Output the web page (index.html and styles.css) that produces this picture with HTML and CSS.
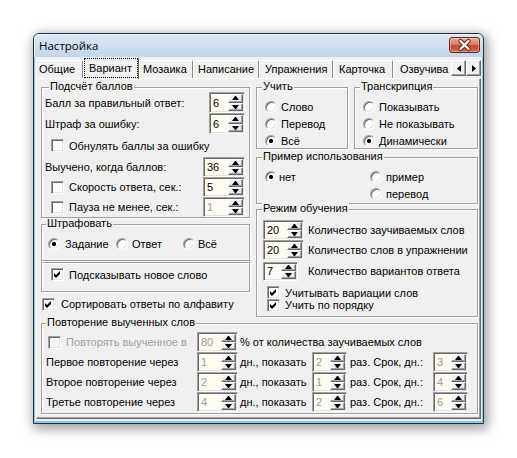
FILE: index.html
```html
<!DOCTYPE html>
<html lang="ru">
<head>
<meta charset="utf-8">
<title>Настройка</title>
<link rel="stylesheet" href="styles.css">
</head>
<body>
<div class="window">
  <div class="titlebar">
    <span class="title">Настройка</span>
    <span class="close"><svg width="29" height="14" viewBox="0 0 29 14"><path d="M10.5 3 L18.5 11 M18.5 3 L10.5 11" stroke="#5a1c12" stroke-width="4.2" stroke-linecap="round"/><path d="M10.5 3 L18.5 11 M18.5 3 L10.5 11" stroke="#fff" stroke-width="2.4" stroke-linecap="round"/></svg></span>
  </div>
  <div class="client">
    <div class="tabs">
      <div class="tablist">
        <span class="tab t1">Общие</span>
        <span class="tab t2 sel"><span class="focus">Вариант</span></span>
        <span class="tab t3">Мозаика</span>
        <span class="tab t4">Написание</span>
        <span class="tab t5">Упражнения</span>
        <span class="tab t6">Карточка</span>
        <span class="tab t7">Озвучива</span>
      </div>
      <div class="arrows">
        <span class="ab"><svg width="4" height="7" viewBox="0 0 4 7"><polygon points="4,0 4,7 0,3.5" fill="#000"/></svg></span>
        <span class="ab"><svg width="4" height="7" viewBox="0 0 4 7"><polygon points="0,0 0,7 4,3.5" fill="#000"/></svg></span>
      </div>
    </div>
    <div class="page">
      <div class="top">
        <div class="lc">
          <div class="g g1">
            <span class="lg">Подсчёт баллов</span>
            <div class="r h21"><span class="lbl">Балл за правильный ответ:</span><span class="sp w36 s21"><span class="v">6</span><span class="ud"><i class="u"></i><i class="d"></i></span></span></div>
            <div class="r h21"><span class="lbl">Штраф за ошибку:</span><span class="sp w36 s21"><span class="v">6</span><span class="ud"><i class="u"></i><i class="d"></i></span></span></div>
            <div class="r h23"><span class="chk ind"><span class="cb"></span>Обнулять баллы за ошибку</span></div>
            <div class="r h20"><span class="lbl">Выучено, когда баллов:</span><span class="sp w42"><span class="v">36</span><span class="ud"><i class="u"></i><i class="d"></i></span></span></div>
            <div class="r h20"><span class="chk ind"><span class="cb"></span>Скорость ответа, сек.:</span><span class="sp w42"><span class="v">5</span><span class="ud"><i class="u"></i><i class="d"></i></span></span></div>
            <div class="r h20"><span class="chk ind"><span class="cb"></span>Пауза не менее, сек.:</span><span class="sp w42 dis"><span class="v">1</span><span class="ud"><i class="u"></i><i class="d"></i></span></span></div>
          </div>
          <div class="g g2">
            <span class="lg">Штрафовать</span>
            <div class="radios3">
              <span class="opt o1"><span class="rb on"></span>Задание</span>
              <span class="opt o2"><span class="rb"></span>Ответ</span>
              <span class="opt o3"><span class="rb"></span>Всё</span>
            </div>
          </div>
          <div class="g g3">
            <div class="r h23"><span class="chk ind"><span class="cb on"><svg width="11" height="11" viewBox="0 0 11 11"><polygon points="2,4 4,6 8,2 8,5 4,9 2,7" fill="#000"/></svg></span>Подсказывать новое слово</span></div>
          </div>
          <div class="sortrow"><span class="chk"><span class="cb on"><svg width="11" height="11" viewBox="0 0 11 11"><polygon points="2,4 4,6 8,2 8,5 4,9 2,7" fill="#000"/></svg></span>Сортировать ответы по алфавиту</span></div>
        </div>
        <div class="rc">
          <div class="pair">
            <div class="g g-learn">
              <span class="lg lgr">Учить</span>
              <div class="rlist">
                <span class="opt"><span class="rb"></span>Слово</span>
                <span class="opt"><span class="rb"></span>Перевод</span>
                <span class="opt"><span class="rb on"></span>Всё</span>
              </div>
            </div>
            <div class="g g-trans">
              <span class="lg lgr">Транскрипция</span>
              <div class="rlist">
                <span class="opt"><span class="rb"></span>Показывать</span>
                <span class="opt"><span class="rb"></span>Не показывать</span>
                <span class="opt"><span class="rb on"></span>Динамически</span>
              </div>
            </div>
          </div>
          <div class="g g-ex">
            <span class="lg lgr">Пример использования</span>
            <div class="exgrid">
              <span class="opt tight"><span class="rb on"></span>нет</span>
              <span class="opt"><span class="rb"></span>пример</span>
              <span></span>
              <span class="opt"><span class="rb"></span>перевод</span>
            </div>
          </div>
          <div class="g g-mode">
            <span class="lg lgm">Режим обучения</span>
            <div class="mrow m1"><span class="sp w41"><span class="v">20</span><span class="ud"><i class="u"></i><i class="d"></i></span></span><span>Количество заучиваемых слов</span></div>
            <div class="mrow m2"><span class="sp w41"><span class="v">20</span><span class="ud"><i class="u"></i><i class="d"></i></span></span><span>Количество слов в упражнении</span></div>
            <div class="mrow m3"><span class="sp w35 s19"><span class="v">7</span><span class="ud"><i class="u"></i><i class="d"></i></span></span><span>Количество вариантов ответа</span></div>
            <div class="crow c1"><span class="chk"><span class="cb on"><svg width="11" height="11" viewBox="0 0 11 11"><polygon points="2,4 4,6 8,2 8,5 4,9 2,7" fill="#000"/></svg></span>Учитывать вариации слов</span></div>
            <div class="crow c2"><span class="chk"><span class="cb on"><svg width="11" height="11" viewBox="0 0 11 11"><polygon points="2,4 4,6 8,2 8,5 4,9 2,7" fill="#000"/></svg></span>Учить по порядку</span></div>
          </div>
        </div>
      </div>
      <div class="g g-rep">
        <span class="lg">Повторение выученных слов</span>
        <div class="rep">
          <span class="chk off first"><span class="cb"></span>Повторять выученное в</span>
          <span class="sp w41 dis"><span class="v">80</span><span class="ud"><i class="u"></i><i class="d"></i></span></span>
          <span class="txt span4">% от количества заучиваемых слов</span>

          <span class="lbl2">Первое повторение через</span>
          <span class="sp w41 dis"><span class="v">1</span><span class="ud"><i class="u"></i><i class="d"></i></span></span>
          <span class="txt">дн., показать</span>
          <span class="sp w35 dis"><span class="v">2</span><span class="ud"><i class="u"></i><i class="d"></i></span></span>
          <span class="txt t3x">раз. Срок, дн.:</span>
          <span class="sp w35 dis"><span class="v">3</span><span class="ud"><i class="u"></i><i class="d"></i></span></span>

          <span class="lbl2">Второе повторение через</span>
          <span class="sp w41 dis"><span class="v">2</span><span class="ud"><i class="u"></i><i class="d"></i></span></span>
          <span class="txt">дн., показать</span>
          <span class="sp w35 dis"><span class="v">1</span><span class="ud"><i class="u"></i><i class="d"></i></span></span>
          <span class="txt t3x">раз. Срок, дн.:</span>
          <span class="sp w35 dis"><span class="v">4</span><span class="ud"><i class="u"></i><i class="d"></i></span></span>

          <span class="lbl2">Третье повторение через</span>
          <span class="sp w41 dis"><span class="v">4</span><span class="ud"><i class="u"></i><i class="d"></i></span></span>
          <span class="txt">дн., показать</span>
          <span class="sp w35 dis"><span class="v">2</span><span class="ud"><i class="u"></i><i class="d"></i></span></span>
          <span class="txt t3x">раз. Срок, дн.:</span>
          <span class="sp w35 dis"><span class="v">6</span><span class="ud"><i class="u"></i><i class="d"></i></span></span>
        </div>
      </div>
    </div>
  </div>
</div>
</body>
</html>
```

FILE: styles.css
```css
* { box-sizing: border-box; }
html, body { margin: 0; padding: 0; }
body {
  width: 517px; height: 458px; overflow: hidden;
  background: #fff;
  font-family: "Liberation Sans", Arial, sans-serif;
  font-size: 11px; color: #000;
}
i { font-style: normal; }

.window {
  margin: 33px 0 0 33px;
  width: 451px; height: 391px;
  border: 1px solid #27313c;
  border-radius: 6px 6px 0 0;
  background: linear-gradient(#dbe7f5, #c3d6ec 23px, #c3d6ec);
  box-shadow: 2px 3px 12px 2px rgba(0,0,0,.38);
  display: flex; flex-direction: column;
}
.titlebar {
  flex: none; height: 23px;
  display: flex; align-items: flex-start;
  padding-left: 5px;
  border-radius: 5px 5px 0 0;
  box-shadow: inset 1px 1px 0 rgba(255,255,255,.6);
}
.title {
  font-family: "Open Sans", "Noto Sans", sans-serif;
  font-size: 11.5px; line-height: 23px; color: #000;
}
.close {
  margin: 3px 3px 0 auto;
  width: 31px; height: 16px;
  border: 1px solid #6e2418;
  border-radius: 3px;
  background: linear-gradient(#e9a899, #d9806b 45%, #c24a30 55%, #d06a4d);
  box-shadow: inset 0 0 0 1px rgba(255,255,255,.35);
  display: flex; align-items: center; justify-content: center;
}

.client {
  flex: 1;
  display: flex; flex-direction: column;
  background: #f0f0f0;
  border: solid #7fcdee;
  border-width: 0 1px 2px 1px;
  padding: 0 1px 2px 1px;
}

/* tabs */
.tabs {
  flex: none; height: 22px; margin-bottom: -1px;
  display: flex; position: relative; z-index: 1;
}
.tablist { flex: 1; display: flex; align-items: flex-end; overflow: hidden; min-width: 0; }
.tab {
  flex: none; height: 18px; margin-bottom: 1px;
  border-left: 1px solid #fff;
  border-top: 1px solid #fff;
  border-right: 1px solid #8a8a8a;
  border-radius: 2px 2px 0 0;
  line-height: 16px; white-space: nowrap;
}
.t1 { width: 47px; padding-left: 2px; }
.t2 { width: 56px; }
.t3 { width: 54px; padding-left: 3px; }
.t4 { width: 66px; padding-left: 4px; }
.t5 { width: 74px; padding-left: 5px; }
.t6 { width: 60px; padding-left: 5px; }
.t7 { flex: 1; padding-left: 6px; border-right: 0; }
.tab.sel {
  height: 22px; margin-bottom: 0;
  background: #f0f0f0;
  border-right-color: #696969;
  padding: 0;
  display: flex;
}
.focus {
  flex: 1; margin: 0 0 1px 0;
  border: 1px dotted #000;
  padding-left: 4px; line-height: 18px;
}
.arrows { flex: none; display: flex; padding-top: 3px; }
.ab {
  width: 15px; height: 16px;
  background: #f0f0f0;
  border: 1px solid;
  border-color: #fff #696969 #696969 #fff;
  box-shadow: inset -1px -1px 0 #a0a0a0;
  display: flex; align-items: center; justify-content: center;
}

.page {
  flex: 1;
  border: 1px solid;
  border-color: #fff #696969 #696969 #fff;
  box-shadow: inset -1px -1px 0 #a0a0a0;
  padding: 8px 2px 4px 4px;
}
.top { display: flex; gap: 6px; }
.lc { width: 209px; }
.rc { width: 222px; }

/* group boxes */
.g {
  border: 1px solid #a0a0a0;
  box-shadow: inset 1px 1px 0 #fff, 1px 1px 0 #fff;
}
.lg {
  display: block; width: max-content;
  margin: -7px 0 0 4px; padding: 0 1px;
  line-height: 11px; height: 11px;
  background: #f0f0f0;
}
.lgr { margin-left: 5px; }

.g1 { height: 131px; padding: 0 4px 0 3px; }
.g2 { height: 37px; margin-top: 6px; }
.g3 { height: 30px; margin-top: 1px; padding: 0 4px 0 0; }
.r { display: flex; align-items: center; justify-content: space-between; }
.h20 { height: 20px; }
.h21 { height: 21px; }
.h23 { height: 23px; }
.ind { margin-left: 6px; }
.g3 .ind { margin-left: 9px; }

.chk { display: flex; align-items: center; gap: 5px; white-space: nowrap; }
.cb {
  flex: none; width: 13px; height: 13px;
  border: 1px solid;
  border-color: #a0a0a0 #fff #fff #a0a0a0;
  box-shadow: inset 1px 1px 0 #696969, inset -1px -1px 0 #e3e3e3;
  background: #fff;
  display: flex;
}
.cb svg { display: block; }

.rb {
  flex: none; width: 12px; height: 12px; border-radius: 50%;
  border: 1px solid;
  border-color: #a0a0a0 #fff #fff #a0a0a0;
  box-shadow: inset 1px 1px 0 #696969, inset -1px -1px 0 #e3e3e3;
  background: #fff;
}
.rb.on { background: radial-gradient(circle, #000 0, #000 1.8px, #fff 2.4px); }
.opt { display: flex; align-items: center; gap: 4px; white-space: nowrap; height: 17px; }
.opt.tight { gap: 2px; }

.radios3 { display: flex; align-items: center; height: 30px; padding-left: 6px; }
.o1 { width: 68px; gap: 5px; }
.o2 { width: 67px; }
.o3 { gap: 3px; }

.sortrow { height: 24px; display: flex; align-items: center; padding-left: 1px; }
.sortrow .chk { gap: 6px; }

/* spinners */
.sp {
  flex: none; display: flex;
  height: 20px;
  border: 1px solid;
  border-color: #a0a0a0 #fff #fff #a0a0a0;
  box-shadow: inset 1px 1px 0 #696969, inset -1px -1px 0 #e3e3e3;
  background: #fffbf0;
  padding: 1px;
}
.s21 { height: 21px; }
.s19 { height: 19px; }
.w35 { width: 35px; }
.w36 { width: 36px; }
.w41 { width: 41px; }
.w42 { width: 42px; }
.sp .v { flex: 1; padding-left: 2px; display: flex; align-items: center; }
.sp.dis .v { color: #9a9a9a; }
.ud { flex: none; width: 15px; display: flex; flex-direction: column; }
.ud i {
  flex: 1; background: #f0f0f0;
  border: 1px solid;
  border-color: #fff #696969 #696969 #fff;
  box-shadow: inset -1px -1px 0 #a0a0a0;
  display: flex; align-items: center; justify-content: center;
}
.ud i::after {
  content: ""; width: 1px; height: 0;
  border-style: solid; border-color: transparent;
}
.ud i.u::after { border-width: 0 3px 4px; border-bottom-color: #000; }
.ud i.d::after { border-width: 4px 3px 0; border-top-color: #000; }

/* right column */
.pair { display: flex; gap: 6px; }
.g-learn { width: 92px; height: 62px; }
.g-trans { width: 124px; height: 62px; }
.rlist { padding: 6px 0 0 8px; display: flex; flex-direction: column; }
.g-ex { height: 47px; margin-top: 8px; }
.exgrid {
  display: grid; grid-template-columns: 105px 1fr;
  padding: 6px 0 0 8px;
}
.g-mode { height: 108px; margin-top: 5px; padding: 0 0 0 6px; }
.g-mode .lgm { margin-left: -1px; }
.mrow { display: grid; grid-template-columns: 45px 1fr; align-items: center; }
.m1 { height: 21px; margin-top: 5px; }
.m2 { height: 20px; }
.m3 { height: 22px; }
.crow { display: flex; align-items: center; padding-left: 4px; }
.c1 { height: 13px; margin-top: 4px; }
.c2 { height: 12px; }

/* bottom group */
.g-rep { height: 91px; margin-top: 6px; }
.rep {
  display: grid;
  grid-template-columns: 151px 41px 74px 35px 86px 35px;
  grid-auto-rows: 20px;
  align-items: center;
  padding: 4px 0 0 4px;
}
.rep .first { margin-left: 2px; color: #a0a0a0; }
.rep .txt { padding-left: 2px; white-space: nowrap; }
.rep .t3x { padding-left: 3px; }
.rep .span4 { grid-column: span 4; }
.rep .cb { background: #f4f4f4; }
.lbl2 { white-space: nowrap; }
```
